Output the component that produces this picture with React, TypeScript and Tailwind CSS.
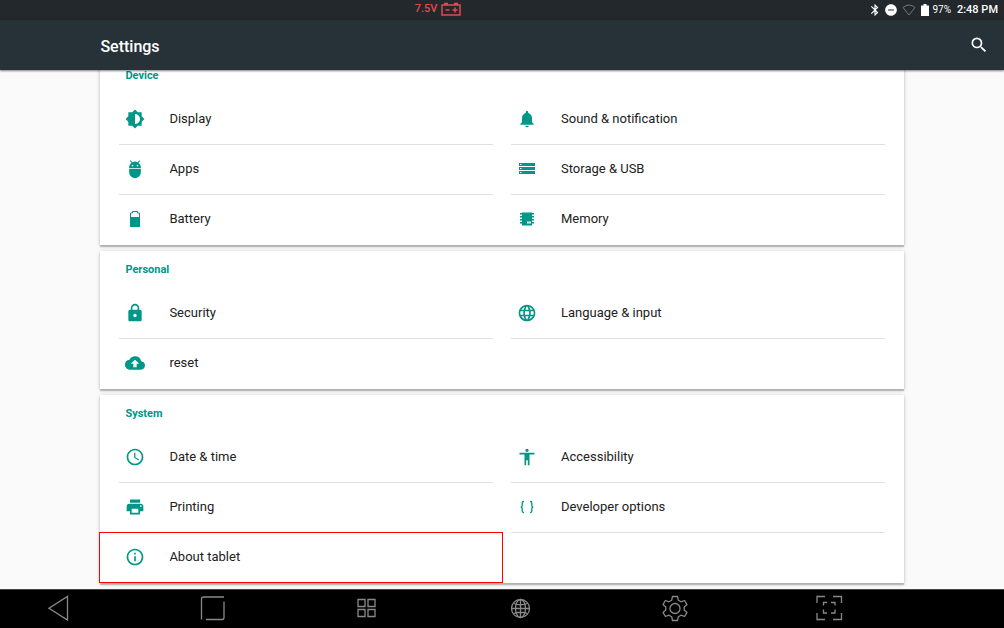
import type { ReactNode } from "react";
import {
  MdAccessibility,
  MdAdb,
  MdBackup,
  MdBluetooth,
  MdBrightness6,
  MdInfoOutline,
  MdLanguage,
  MdLock,
  MdNotifications,
  MdPrint,
  MdRemoveCircle,
  MdSchedule,
  MdSearch,
} from "react-icons/md";

interface SettingItem {
  label: string;
  icon: ReactNode;
  highlighted?: boolean;
}

interface SettingSection {
  title: string;
  items: SettingItem[];
}

function StorageIcon() {
  return (
    <svg viewBox="0 0 20 20" className="h-5 w-5" fill="currentColor" aria-hidden="true">
      <path fillRule="evenodd" d="M2 4h16v3H2zM3 5v1h1.500V5zM2 8h16v3H2zM3 9v1h1.500V9zM2 12h16v3H2zM3 13v1h1.500v-1z" />
    </svg>
  );
}

function BatteryIcon() {
  return (
    <svg viewBox="0 0 20 20" className="h-5 w-5" aria-hidden="true">
      <path d="M5.500 8V4h2V2.500h5V4h2v4" fill="none" stroke="currentColor" strokeWidth="1" />
      <path d="M5 8h10v10H5z" fill="currentColor" />
    </svg>
  );
}

function MemoryIcon() {
  return (
    <svg viewBox="0 0 20 20" className="h-5 w-5" fill="currentColor" aria-hidden="true">
      <path fillRule="evenodd" d="M5 3.500h10v13H5zM10 12.500v2h4v-2z" />
      <path d="M3 4h14v1.500H3zM3 7h14v1.500H3zM3 10h2v1.500H3zM15 10h2v1.500h-2zM3 13h2v1.500H3zM15 13h2v1.500h-2z" />
      <path d="M11.500 12.500h1v2h-1z" opacity="0.5" />
    </svg>
  );
}

function BracesIcon() {
  return (
    <svg viewBox="0 0 20 20" className="h-5 w-5" fill="none" stroke="currentColor" strokeWidth="1.300" aria-hidden="true">
      <path d="M7 4.500H6.500Q5.200 4.500 5.200 6v2.300Q5.200 10 3.700 10Q5.200 10 5.200 11.700V14Q5.200 15.500 6.500 15.500H7" />
      <path d="M13 4.500h.5Q14.800 4.500 14.800 6v2.300Q14.800 10 16.300 10Q14.800 10 14.800 11.700V14Q14.800 15.500 13.500 15.500H13" />
    </svg>
  );
}

const SECTIONS: SettingSection[] = [
  {
    title: "Device",
    items: [
      { label: "Display", icon: <MdBrightness6 className="h-5 w-5" /> },
      { label: "Sound & notification", icon: <MdNotifications className="h-5 w-5" /> },
      { label: "Apps", icon: <MdAdb className="h-5 w-5" /> },
      { label: "Storage & USB", icon: <StorageIcon /> },
      { label: "Battery", icon: <BatteryIcon /> },
      { label: "Memory", icon: <MemoryIcon /> },
    ],
  },
  {
    title: "Personal",
    items: [
      { label: "Security", icon: <MdLock className="h-5 w-5" /> },
      { label: "Language & input", icon: <MdLanguage className="h-5 w-5" /> },
      { label: "reset", icon: <MdBackup className="h-5 w-5" /> },
    ],
  },
  {
    title: "System",
    items: [
      { label: "Date & time", icon: <MdSchedule className="h-5 w-5" /> },
      { label: "Accessibility", icon: <MdAccessibility className="h-5 w-5" /> },
      { label: "Printing", icon: <MdPrint className="h-5 w-5" /> },
      { label: "Developer options", icon: <BracesIcon /> },
      { label: "About tablet", icon: <MdInfoOutline className="h-5 w-5" />, highlighted: true },
    ],
  },
];

const NAV_ITEMS: { label: string; icon: ReactNode }[] = [
  { label: "Back", icon: <path d="M22.500 2.500v23.500L4 14.200z" /> },
  {
    label: "Home",
    icon: <path d="M2.500 25.500V5q0-2 2-2h20.500M25 7.500V23.500q0 2-2 2H7" />,
  },
  {
    label: "Apps",
    icon: <path d="M5 5.500h7v7H5zM15 5.500h7v7h-7zM5 15.500h7v7H5zM15 15.500h7v7h-7z" />,
  },
  {
    label: "Browser",
    icon: (
      <>
        <circle cx="13.500" cy="14.500" r="9" />
        <ellipse cx="13.500" cy="14.500" rx="5" ry="9" />
        <path d="M13.500 5.500v18M4.500 14.500h18M6.500 9.500q7 2.500 14 0M6.500 19.500q7-2.500 14 0" />
      </>
    ),
  },
  {
    label: "Settings",
    icon: (
      <>
        <circle cx="14" cy="14.500" r="5" />
        <path
          d="M11.500 2.500h5l.8 3.700 2.700 1.600 3.600-1.300 2.400 4.100-2.800 2.500v2.800l2.800 2.500-2.400 4.100-3.600-1.300-2.700 1.600-.8 3.700h-5l-.8-3.700L8 21.200l-3.600 1.300L2 18.400l2.800-2.500v-2.800L2 10.600l2.400-4.100L8 7.800l2.700-1.600z"
          strokeLinejoin="round"
        />
      </>
    ),
  },
  {
    label: "Screenshot",
    icon: (
      <>
        <path d="M2 9V2.500h8M18 2.500h8.500V9M26.500 19v6.500H18M10 25.500H2V19" />
        <path d="M8.500 11.500v-3H12M16 8.500h4v3M20 15.500v3.500h-4M12 19H8.500v-3.500" />
      </>
    ),
  },
];

function StatusBar() {
  return (
    <div className="grid h-5 shrink-0 grid-cols-[1fr_auto_1fr] items-center bg-[#22282b] pr-[6px] text-white">
      <span />
      <div className="mr-[122px] flex items-center gap-1 pb-[3px] text-[#e04a50]">
        <span className="text-[11px] leading-4 font-medium">7.5V</span>
        <svg viewBox="0 0 20 14" className="h-[14px] w-5" fill="none" stroke="currentColor" strokeWidth="1.500" aria-hidden="true">
          <path d="M1 3h18v10H1zM3 1.500h4M13 1.500h4M4.500 8h4M11.500 8h5M14 5.500v5" />
        </svg>
      </div>
      <div className="flex items-center justify-end">
        <MdBluetooth className="mr-[2px] h-[14px] w-[14px]" />
        <MdRemoveCircle className="mr-1 h-[14px] w-[14px]" />
        <svg viewBox="0 0 14 12" className="mr-1 h-3 w-[14px]" fill="none" stroke="#70777a" strokeWidth="1" aria-hidden="true">
          <path d="M1 3.500Q7-1.500 13 3.500L7 11z" />
        </svg>
        <svg viewBox="0 0 10 12" className="mr-[2px] h-3 w-[10px]" fill="currentColor" aria-hidden="true">
          <path d="M1 1.500h2.500V0h3v1.500H9V12H1z" />
        </svg>
        <span className="mr-[6px] text-[10px] leading-4">97%</span>
        <span className="text-[11px] leading-4 font-medium">2:48 PM</span>
      </div>
    </div>
  );
}

function SettingRow({ item, divider }: { item: SettingItem; divider: boolean }) {
  return (
    <li className={`relative h-[50px] border-b ${divider ? "border-[#e0e0e0]" : "border-transparent"}`}>
      <button type="button" className="flex h-full w-full items-center gap-6 px-[6px] pb-px text-left">
        <span className="flex h-5 w-5 shrink-0 items-center justify-center text-[#009688]">{item.icon}</span>
        <span className="text-[13px] leading-5 text-[#212121]">{item.label}</span>
      </button>
      {item.highlighted && (
        <span className="pointer-events-none absolute -top-px -right-[10px] -bottom-px -left-5 border border-[#ff0000]" />
      )}
    </li>
  );
}

function SectionCard({ section }: { section: SettingSection }) {
  const lastRow = Math.ceil(section.items.length / 2) - 1;

  return (
    <section className="shrink-0 bg-white px-[19px] shadow-[0_2px_1px_rgba(0,0,0,0.18),0_1px_4px_rgba(0,0,0,0.22)]">
      <h2 className="flex h-[38px] items-center px-[6px] text-[11px] leading-4 font-bold text-[#009688]">
        {section.title}
      </h2>
      <ul className="grid grid-cols-2 gap-x-[18px]">
        {section.items.map((item, i) => (
          <SettingRow key={item.label} item={item} divider={Math.floor(i / 2) < lastRow} />
        ))}
      </ul>
    </section>
  );
}

export default function App() {
  return (
    <div className="flex h-screen flex-col bg-[#fafafa] font-[Roboto,sans-serif]">
      <StatusBar />

      <header className="z-10 flex h-[50px] shrink-0 items-center justify-between bg-[#263238] pr-[15px] pl-[10%] text-white shadow-[0_1px_2px_rgba(0,0,0,0.5)]">
        <h1 className="pt-1 text-base font-medium">Settings</h1>
        <button type="button" aria-label="Search">
          <MdSearch className="h-5 w-5" />
        </button>
      </header>

      {/* Scrolled to the end of the list */}
      <main className="flex min-h-0 flex-1 flex-col justify-end gap-[6px] overflow-hidden px-[10%] pb-[6px]">
        {SECTIONS.map((section) => (
          <SectionCard key={section.title} section={section} />
        ))}
      </main>

      <nav className="z-10 flex h-[39px] shrink-0 items-center justify-between border-t border-[#444444] bg-black pr-[161px] pb-[2px] pl-[45px]">
        {NAV_ITEMS.map((item) => (
          <button key={item.label} type="button" aria-label={item.label} className="text-[#8c8888]">
            <svg viewBox="0 0 28 28" className="h-7 w-7" fill="none" stroke="currentColor" strokeWidth="1.300" aria-hidden="true">
              {item.icon}
            </svg>
          </button>
        ))}
      </nav>
    </div>
  );
}
